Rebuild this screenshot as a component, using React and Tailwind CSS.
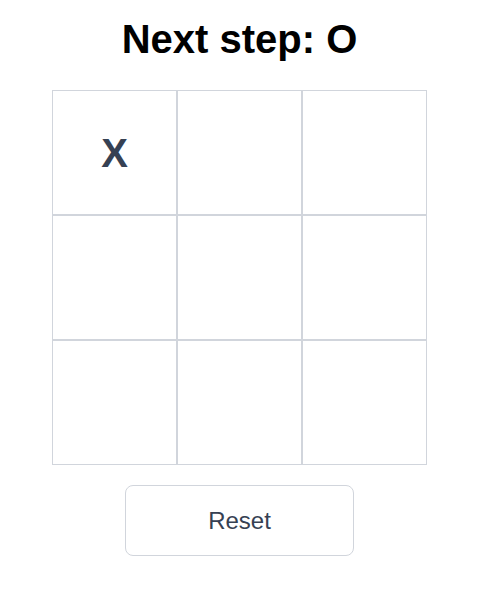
import { useState } from 'react';

const Square = ({ value, onClick }) => (
  <button
    onClick={onClick}
    className="w-[125px] h-[125px] border border-gray-300 bg-white flex items-center justify-center text-[40px] font-bold text-gray-700"
  >
    {value}
  </button>
);

const App = () => {
  const [squares, setSquares] = useState(['X', null, null, null, null, null, null, null, null]);
  const xCount = squares.filter((s) => s === 'X').length;
  const oCount = squares.filter((s) => s === 'O').length;
  const next = xCount > oCount ? 'O' : 'X';

  const handleClick = (i) => {
    if (squares[i]) return;
    const copy = squares.slice();
    copy[i] = next;
    setSquares(copy);
  };

  return (
    <div
      className="w-[479px] flex flex-col items-center pt-[15px] bg-white min-h-screen"
      style={{ fontFamily: '"Liberation Sans", Arial, sans-serif' }}
    >
      <h1 className="text-[40px] leading-[48px] font-bold text-black">Next step: {next}</h1>
      <div className="mt-[27px] grid grid-cols-3 w-[375px]">
        {squares.map((s, i) => (
          <Square key={i} value={s} onClick={() => handleClick(i)} />
        ))}
      </div>
      <button
        onClick={() => setSquares(Array(9).fill(null))}
        className="mt-[20px] w-[229px] h-[71px] rounded-lg border border-gray-300 bg-white text-[24px] text-gray-700"
      >
        Reset
      </button>
    </div>
  );
};

export default App;
